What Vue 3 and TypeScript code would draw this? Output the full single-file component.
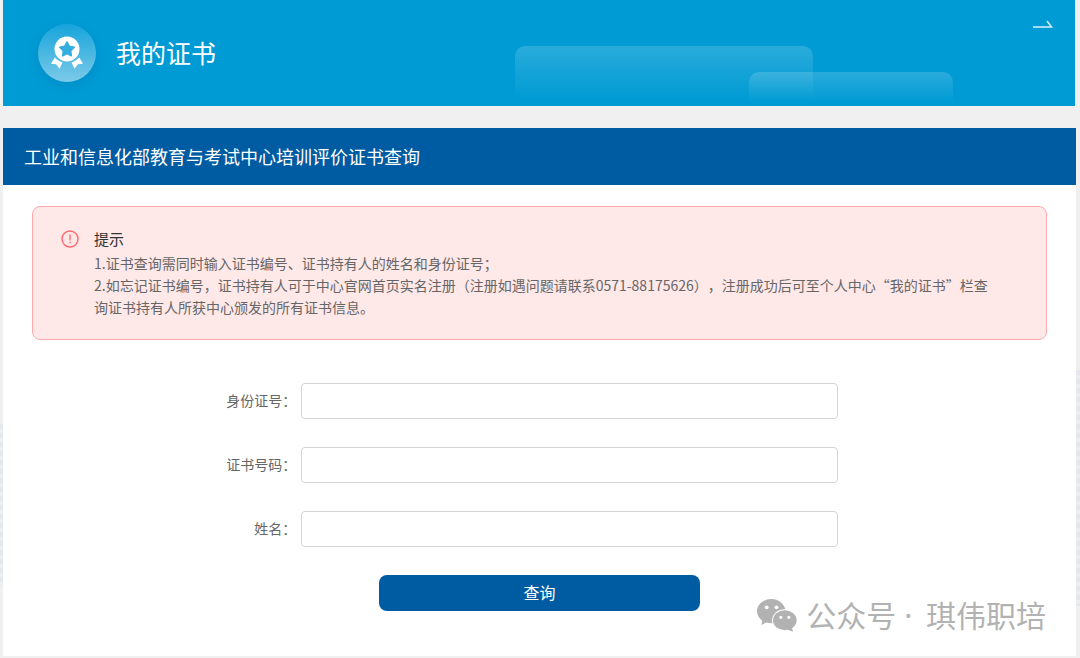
<script setup lang="ts">
import { reactive } from 'vue'

interface Field {
  id: 'idNumber' | 'certNumber' | 'fullName'
  label: string
}

const fields: Field[] = [
  { id: 'idNumber', label: '身份证号：' },
  { id: 'certNumber', label: '证书号码：' },
  { id: 'fullName', label: '姓名：' },
]

const form = reactive<Record<Field['id'], string>>({
  idNumber: '',
  certNumber: '',
  fullName: '',
})
</script>

<template>
  <div class="page">
    <header class="banner">
      <span class="deco deco-wide"></span>
      <span class="deco deco-narrow"></span>
      <span class="medal">
        <svg viewBox="0 0 58 58" width="58" height="58" aria-hidden="true">
          <circle cx="29" cy="25" r="12.500" fill="#fff" />
          <path
            d="M29 18l2.300 4.400 4.900.9-3.500 3.500.6 4.900-4.300-2.200-4.300 2.200.6-4.900-3.500-3.500 4.900-.9z"
            fill="#34aede"
            stroke="#34aede"
            stroke-width="1.600"
            stroke-linejoin="round"
          />
          <path d="M16.800 33.500L13 39.800l5 .4 3.500 4.500 3-6.300c-3-.9-5.700-2.600-7.700-4.900z" fill="#fff" />
          <path d="M41.200 33.500L45 39.800l-5 .4-3.500 4.500-3-6.300c3-.9 5.700-2.600 7.700-4.900z" fill="#fff" />
        </svg>
      </span>
      <h1>我的证书</h1>
      <a class="more" href="#" aria-label="更多">
        <svg viewBox="0 0 20 8" width="20" height="8" aria-hidden="true">
          <path d="M0 7h18.500L14 1" fill="none" stroke="#fff" stroke-width="1.500" opacity=".85" />
        </svg>
      </a>
    </header>

    <main class="panel">
      <h2>工业和信息化部教育与考试中心培训评价证书查询</h2>

      <section class="notice">
        <svg class="alert" viewBox="0 0 18 18" width="18" height="18" aria-hidden="true">
          <circle cx="9" cy="9" r="8" fill="none" stroke="#ff6b6e" stroke-width="1.500" />
          <path d="M9 4.500v6M9 11.800v1.500" stroke="#ff6b6e" stroke-width="1.400" />
        </svg>
        <div class="notice-body">
          <h3>提示</h3>
          <p>1.证书查询需同时输入证书编号、证书持有人的姓名和身份证号；</p>
          <p>2.如忘记证书编号，证书持有人可于中心官网首页实名注册（注册如遇问题请联系0571-88175626），注册成功后可至个人中心“我的证书”栏查询证书持有人所获中心颁发的所有证书信息。</p>
        </div>
      </section>

      <form class="query" @submit.prevent>
        <div v-for="field in fields" :key="field.id" class="row">
          <label :for="field.id">{{ field.label }}</label>
          <input :id="field.id" v-model="form[field.id]" type="text" />
        </div>
        <button type="submit">查询</button>
      </form>

      <div class="account">
        <svg viewBox="0 0 40 33" width="40" height="33" aria-hidden="true">
          <path
            d="M14.500 0C6.500 0 0 5.500 0 12.300c0 3.900 2.100 7.200 5.300 9.500L4.300 26l5-2.600c1.900.6 3.900.9 6.200.8h8l5-13.500C27 4.500 21.300 0 14.500 0z"
            fill="#b2b2b2"
          />
          <ellipse cx="27.800" cy="21.300" rx="12.800" ry="11" fill="#fff" />
          <ellipse cx="27.800" cy="21.300" rx="11.800" ry="10" fill="#b2b2b2" />
          <path d="M30 30.500l6 2.200-1.300-5.200z" fill="#b2b2b2" />
          <g fill="#fff">
            <circle cx="9.700" cy="8.300" r="1.900" />
            <circle cx="19.500" cy="8.300" r="1.900" />
            <circle cx="23.800" cy="18.300" r="1.600" />
            <circle cx="31.800" cy="18.300" r="1.600" />
          </g>
        </svg>
        <p>公众号<span class="dot"> · </span>琪伟职培</p>
      </div>
    </main>
  </div>
</template>

<style>
body {
  margin: 0;
  background: #f0f0f0;
}
</style>

<style scoped>
.page {
  box-sizing: border-box;
  padding: 0 4px 4px 3px;
  background:
    repeating-linear-gradient(#e4e8ec 0 5px, #ebedf0 5px 9px) 0 424px / 3px 162px no-repeat,
    repeating-linear-gradient(#e4e8ec 0 5px, #ebedf0 5px 9px) 100% 370px / 4px 236px no-repeat;
  font-family: "Noto Sans CJK SC", "Noto Sans", sans-serif;
  font-size: 14px;
  text-spacing-trim: space-all;
  color: #666;
}

h1,
h2,
h3,
p {
  margin: 0;
  font-weight: 400;
}

.banner {
  position: relative;
  display: flex;
  align-items: center;
  gap: 20px;
  height: 106px;
  margin: 0 1px 22px 0;
  padding: 0 22px 0 35px;
  box-sizing: border-box;
  overflow: hidden;
  background: #009bd4;
  color: #fff;
}

.deco {
  position: absolute;
  bottom: 0;
  border-radius: 10px 10px 0 0;
  background: linear-gradient(rgba(255, 255, 255, 0.16), rgba(255, 255, 255, 0) 90%);
}

.deco-wide {
  right: 262px;
  width: 298px;
  height: 60px;
}

.deco-narrow {
  right: 122px;
  width: 204px;
  height: 34px;
}

.medal {
  display: flex;
  border-radius: 50%;
  background: linear-gradient(#16a4dc, #7ccae8);
  box-shadow: 0 4px 12px rgba(0, 90, 150, 0.2);
}

.banner h1 {
  flex: 1;
  padding-bottom: 2px;
  font-size: 25px;
  line-height: 36px;
}

.more {
  display: flex;
  align-self: flex-start;
  margin-top: 20px;
}

.panel {
  background: #fff;
}

.panel h2 {
  padding: 14px 21px 15px;
  background: #005ca2;
  color: #fff;
  font-size: 18px;
  line-height: 28px;
}

.notice {
  display: flex;
  gap: 15px;
  margin: 21px 29px 0;
  padding: 21px 48px 21px 28px;
  border: 1px solid #ffabad;
  border-radius: 8px;
  background: #ffe8e8;
}

.alert {
  flex: none;
  margin-top: 2px;
}

.notice h3 {
  margin-bottom: 2px;
  color: #333;
  font-size: 15px;
  line-height: 22px;
}

.notice p {
  line-height: 22px;
}

.query {
  display: flex;
  flex-direction: column;
  align-items: center;
  gap: 28px;
  margin-top: 43px;
}

.row {
  display: flex;
  align-items: center;
  width: 100%;
}

.row label {
  width: 27.8%;
  padding: 0 5px 2px 0;
  box-sizing: border-box;
  text-align: right;
}

.row input {
  width: 50%;
  height: 36px;
  box-sizing: border-box;
  padding: 0 12px;
  border: 1px solid #d4d4d4;
  border-radius: 4px;
  background: #fff;
  color: #333;
  font: inherit;
}

.query button {
  width: 30%;
  height: 36px;
  padding: 0 0 2px;
  border: 0;
  border-radius: 8px;
  background: #005ca2;
  color: #fff;
  font: inherit;
  font-size: 16px;
}

.account {
  display: flex;
  align-items: center;
  justify-content: flex-end;
  gap: 9px;
  margin-top: -18px;
  padding: 0 30px 19px 0;
  color: #b2b2b2;
  font-size: 30px;
  line-height: 43px;
}

.dot {
  padding-right: 6px;
  font-family: "Noto Sans", sans-serif;
}
</style>
